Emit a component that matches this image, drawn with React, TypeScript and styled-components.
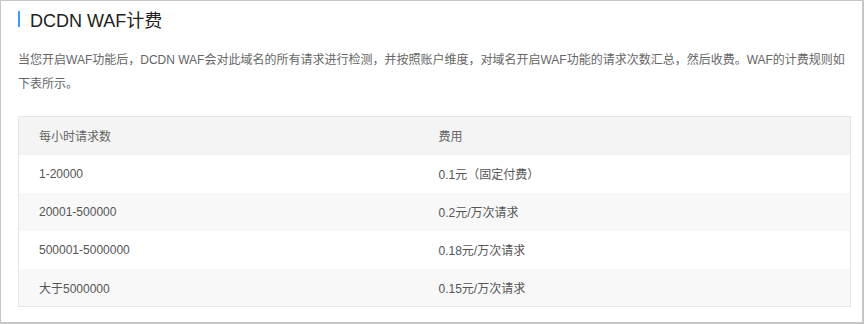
import React from "react";
import styled, { createGlobalStyle } from "styled-components";

const Global = createGlobalStyle`
  html, body { margin: 0; padding: 0; background: #fff; }
  body { font-family: "Liberation Sans", "Noto Sans CJK SC", sans-serif; }
`;

const Frame = styled.div`
  box-sizing: border-box;
  width: 864px;
  height: 324px;
  border-style: solid;
  border-color: #c6c6c6;
  border-width: 1px 2px 2px 1px;
  padding: 0 11px 0 17px;
  background: #fff;
`;

const Title = styled.h2`
  margin: 0;
  height: 36px;
  display: flex;
  align-items: center;
  gap: 10px;
  font-size: 18px;
  font-weight: normal;
  color: #222;
  &::before {
    content: "";
    display: block;
    width: 2px;
    height: 16px;
    background: #3d9df5;
  }
`;

const Paragraph = styled.p`
  margin: 11px 0 0;
  font-size: 12px;
  line-height: 24px;
  color: #666;
`;

const Table = styled.table`
  margin-top: 20px;
  width: 833px;
  border-collapse: collapse;
  border: 1px solid #e6e6e6;
  table-layout: fixed;
  font-size: 12px;
  color: #555;
`;

const Row = styled.tr<{ $tone: "head" | "odd" | "even" }>`
  height: 38px;
  background: ${(p) =>
    p.$tone === "head" ? "#f4f4f4" : p.$tone === "even" ? "#f8f8f8" : "#fff"};
`;

const Cell = styled.td`
  padding: 0 0 0 20px;
  text-align: left;
  font-weight: normal;
  vertical-align: middle;
`;

const HeadCell = styled(Cell).attrs({ as: "th" })`
  color: #666;
`;

const rows: [string, string][] = [
  ["1-20000", "0.1元（固定付费）"],
  ["20001-500000", "0.2元/万次请求"],
  ["500001-5000000", "0.18元/万次请求"],
  ["大于5000000", "0.15元/万次请求"],
];

export default function App() {
  return (
    <>
      <Global />
      <Frame>
        <Title>DCDN WAF计费</Title>
        <Paragraph>
          当您开启WAF功能后，DCDN WAF会对此域名的所有请求进行检测，并按照账户维度，对域名开启WAF功能的请求次数汇总，然后收费。WAF的计费规则如下表所示。
        </Paragraph>
        <Table>
          <colgroup>
            <col style={{ width: 400 }} />
            <col />
          </colgroup>
          <thead>
            <Row $tone="head">
              <HeadCell>每小时请求数</HeadCell>
              <HeadCell>费用</HeadCell>
            </Row>
          </thead>
          <tbody>
            {rows.map(([a, b], i) => (
              <Row key={a} $tone={i % 2 === 0 ? "odd" : "even"}>
                <Cell>{a}</Cell>
                <Cell>{b}</Cell>
              </Row>
            ))}
          </tbody>
        </Table>
      </Frame>
    </>
  );
}
